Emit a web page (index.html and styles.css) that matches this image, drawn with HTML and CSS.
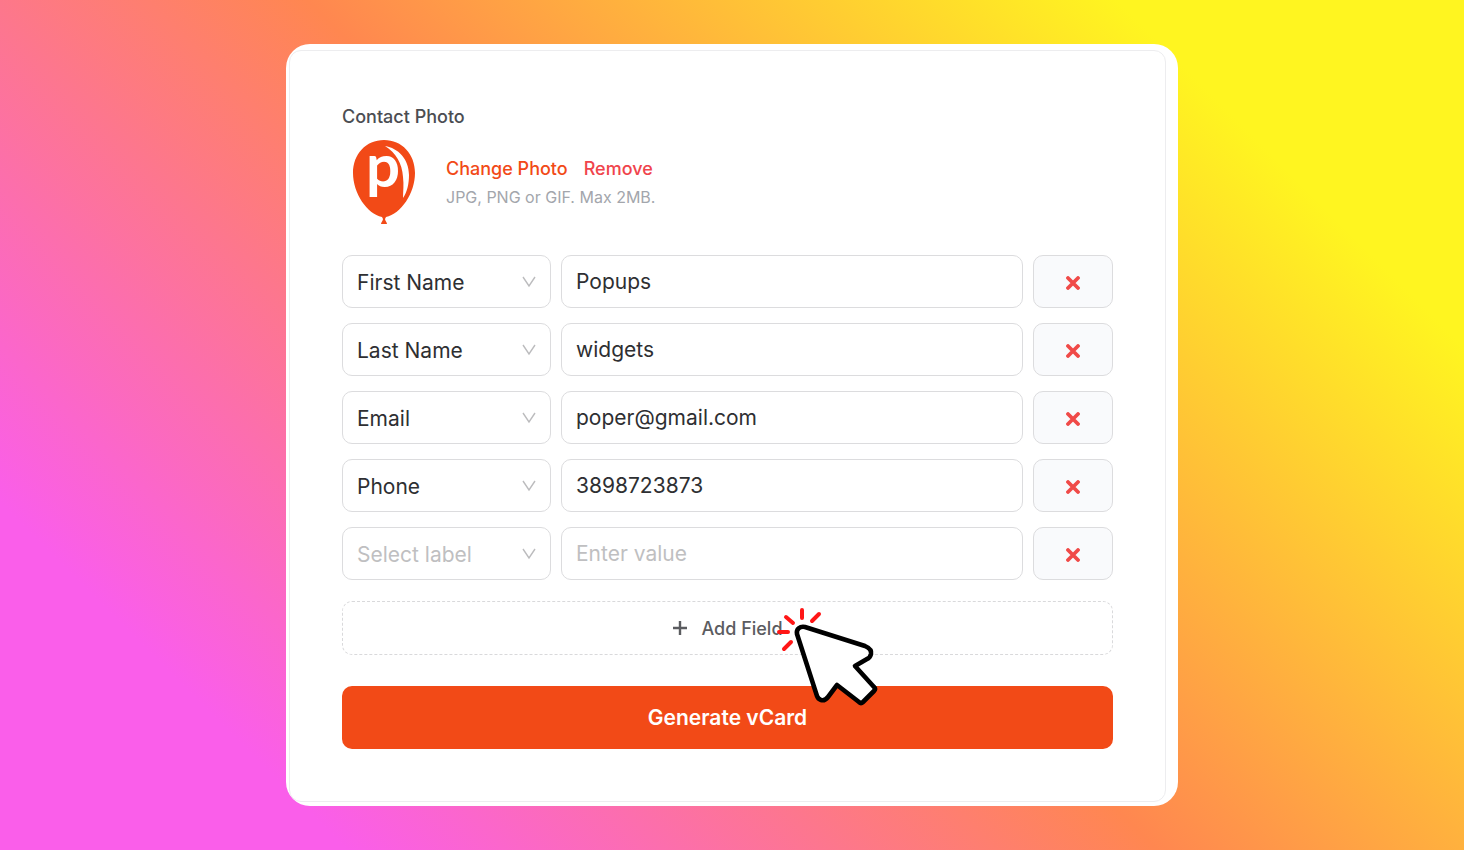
FILE: index.html
```
<!DOCTYPE html>
<html lang="en">
<head>
<meta charset="UTF-8">
<meta name="viewport" content="width=device-width, initial-scale=1.0">
<title>vCard Generator</title>
<link rel="stylesheet" href="styles.css">
</head>
<body>

<main class="card">
    <form class="panel">
        <h2 class="title">Contact Photo</h2>
        <div class="photo">
            <svg class="avatar" viewBox="0 0 84 84" aria-hidden="true">
                <path fill="#f24a17" d="M42 0C60 0 73 14 73 33C73 53 59 74 44 77L43 79C43 81 45 82 45 84H39C39 82 41 81 41 79L40 77C25 74 11 53 11 33C11 14 24 0 42 0Z"/>
                <path fill="#fff" d="M43 6C56 8 67 19 67 35C67 44 65 52 61 58C61 51 62 45 61 37C60 23 54 13 43 6Z"/>
                <text class="logo-letter" x="24" y="47">p</text>
            </svg>
            <div class="photo-info">
                <div class="photo-actions">
                    <button type="button" class="link-btn">Change Photo</button>
                    <button type="button" class="link-btn remove">Remove</button>
                </div>
                <p class="hint">JPG, PNG or GIF. Max 2MB.</p>
            </div>
        </div>

        <div class="fields">
            <div class="row">
                <div class="select-box">
                    <select aria-label="Field label"><option>First Name</option></select>
                    <svg class="arrow" viewBox="0 0 14 12"><path d="M1 1L7 10L13 1"/></svg>
                </div>
                <input type="text" aria-label="First Name" placeholder="Enter value" value="Popups">
                <button type="button" class="delete" aria-label="Delete field"><svg viewBox="0 0 14 14"><path d="M2 2L12 12M12 2L2 12"/></svg></button>
            </div>
            <div class="row">
                <div class="select-box">
                    <select aria-label="Field label"><option>Last Name</option></select>
                    <svg class="arrow" viewBox="0 0 14 12"><path d="M1 1L7 10L13 1"/></svg>
                </div>
                <input type="text" aria-label="Last Name" placeholder="Enter value" value="widgets">
                <button type="button" class="delete" aria-label="Delete field"><svg viewBox="0 0 14 14"><path d="M2 2L12 12M12 2L2 12"/></svg></button>
            </div>
            <div class="row">
                <div class="select-box">
                    <select aria-label="Field label"><option>Email</option></select>
                    <svg class="arrow" viewBox="0 0 14 12"><path d="M1 1L7 10L13 1"/></svg>
                </div>
                <input type="text" aria-label="Email" placeholder="Enter value" value="poper@gmail.com">
                <button type="button" class="delete" aria-label="Delete field"><svg viewBox="0 0 14 14"><path d="M2 2L12 12M12 2L2 12"/></svg></button>
            </div>
            <div class="row">
                <div class="select-box">
                    <select aria-label="Field label"><option>Phone</option></select>
                    <svg class="arrow" viewBox="0 0 14 12"><path d="M1 1L7 10L13 1"/></svg>
                </div>
                <input type="text" aria-label="Phone" placeholder="Enter value" value="3898723873">
                <button type="button" class="delete" aria-label="Delete field"><svg viewBox="0 0 14 14"><path d="M2 2L12 12M12 2L2 12"/></svg></button>
            </div>
            <div class="row">
                <div class="select-box">
                    <select class="empty" aria-label="Field label"><option value="">Select label</option></select>
                    <svg class="arrow" viewBox="0 0 14 12"><path d="M1 1L7 10L13 1"/></svg>
                </div>
                <input type="text" aria-label="Value" placeholder="Enter value">
                <button type="button" class="delete" aria-label="Delete field"><svg viewBox="0 0 14 14"><path d="M2 2L12 12M12 2L2 12"/></svg></button>
            </div>
        </div>

        <div class="add-wrap">
            <button type="button" class="add">
                <svg viewBox="0 0 16 16"><path d="M8 1V15M1 8H15"/></svg>
                Add Field
            </button>
            <svg class="cursor" viewBox="0 0 106 106" aria-hidden="true">
                <path class="arrow-shape" d="M22 29C21 24 25 21 30 22L90 41Q97 44 96 49Q95 53 92 54L80 61L99 82Q101 84 99 86L88 97Q86 99 84 97L62 80L53 92Q50 96 46 95Q43 94 42 91Z"/>
                <path class="rays" d="M27 5V13M44 9L37 16M11 12L18 18M4 27H13M16 37L9 44"/>
            </svg>
        </div>

        <button type="submit" class="generate">Generate vCard</button>
    </form>
</main>

</body>
</html>
```
FILE: styles.css
```
* {
    box-sizing: border-box;
}
body {
    font-family: Inter, "Liberation Sans", sans-serif;
    background: linear-gradient(45deg, #fa5eea 15%, #ff8750 50%, #fff520 85%);
    display: flex;
    justify-content: center;
    align-items: center;
    min-height: 100vh;
    margin: 0;
}
.card {
    background: #fff;
    border-radius: 24px;
    padding: 6px 12px 4px 3px;
    width: 100%;
    max-width: 892px;
}
.panel {
    border: 1px solid #ededef;
    border-radius: 12px;
    padding: 53px 52px 52px;
}
button, input, select {
    font-family: inherit;
}
button {
    cursor: pointer;
}
.title {
    color: #4b4d52;
    font-size: 18px;
    font-weight: 500;
    line-height: 26px;
    margin: 0 0 10px;
}
.photo {
    display: flex;
    align-items: center;
    gap: 20px;
    margin-bottom: 31px;
}
.avatar {
    width: 84px;
    height: 84px;
    overflow: visible;
}
.logo-letter {
    fill: #fff;
    font-family: Lato, sans-serif;
    font-size: 60px;
    font-weight: 700;
}
.photo-actions {
    display: flex;
    gap: 16px;
}
.link-btn {
    background: none;
    border: none;
    padding: 0;
    color: #f24a17;
    font-size: 18px;
    font-weight: 500;
    line-height: 28px;
}
.link-btn.remove {
    color: #f0444c;
}
.hint {
    color: #a3a6ac;
    font-size: 16px;
    line-height: 24px;
    margin: 2px 0 0;
}
.fields {
    display: flex;
    flex-direction: column;
    gap: 15px;
}
.row {
    display: grid;
    grid-template-columns: 209px 1fr 80px;
    gap: 10px;
}
.select-box {
    position: relative;
}
select, input {
    appearance: none;
    background: #fff;
    border: 1px solid #dcdcde;
    border-radius: 10px;
    color: #2e2f32;
    font-size: 21px;
    width: 100%;
    height: 53px;
    padding: 0 14px;
}
select {
    padding-top: 2px;
}
select.empty, input::placeholder {
    color: #bfbfc1;
    opacity: 1;
}
.arrow {
    position: absolute;
    right: 15px;
    top: 21px;
    width: 14px;
    height: 12px;
    fill: none;
    stroke: #bcbcbe;
    stroke-width: 1.4;
    pointer-events: none;
}
.delete {
    display: flex;
    justify-content: center;
    align-items: center;
    background: #f9fafc;
    border: 1px solid #dcdcde;
    border-radius: 10px;
    padding: 3px 0 0;
}
.delete svg {
    width: 14px;
    height: 14px;
    stroke: #f04a48;
    stroke-width: 3.8;
    stroke-linecap: round;
}
.add-wrap {
    position: relative;
    margin: 21px 0 31px;
}
.add {
    display: flex;
    justify-content: center;
    align-items: center;
    gap: 13px;
    width: 100%;
    height: 54px;
    background: #fff;
    border: 1px dashed #d9d9db;
    border-radius: 10px;
    color: #5b5c60;
    font-size: 18px;
    font-weight: 500;
}
.add svg {
    width: 16px;
    height: 16px;
    stroke: #5b5c60;
    stroke-width: 2.4;
}
.cursor {
    position: absolute;
    left: calc(50% + 47px);
    top: 4px;
    width: 106px;
    height: 106px;
    fill: none;
    pointer-events: none;
    z-index: 1;
}
.arrow-shape {
    fill: #fff;
    stroke: #000;
    stroke-width: 4.6;
    stroke-linejoin: round;
}
.rays {
    stroke: #ff1616;
    stroke-width: 4;
    stroke-linecap: round;
}
.generate {
    display: block;
    width: 100%;
    height: 63px;
    background: #f24a17;
    border: none;
    border-radius: 10px;
    color: #fff;
    font-size: 21px;
    font-weight: 600;
}
```
